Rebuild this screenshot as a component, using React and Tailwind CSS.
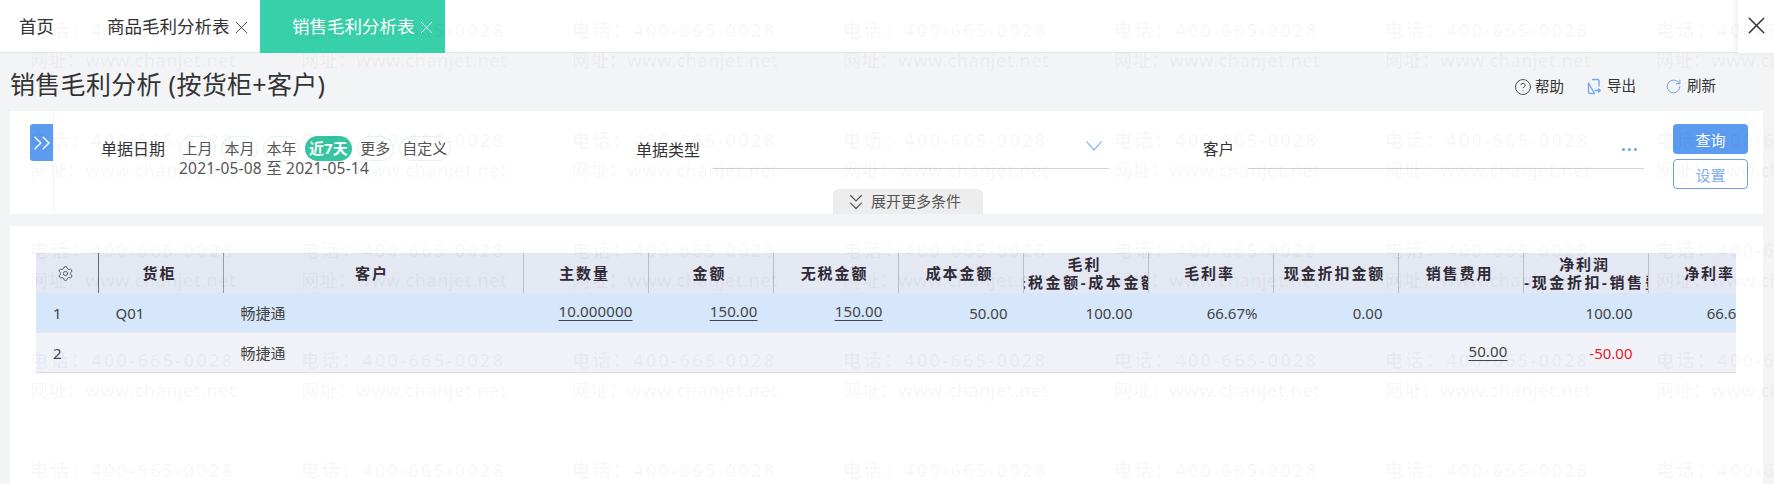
import { X, ChevronsDown, ChevronsRight, Settings, CircleHelp, RotateCw } from 'lucide-react'

const font = { fontFamily: '"Noto Sans", "Noto Sans CJK SC", sans-serif' }

const columns = [
  { title: '货柜' },
  { title: '客户' },
  { title: '主数量' },
  { title: '金额' },
  { title: '无税金额' },
  { title: '成本金额' },
  { title: '毛利', sub: '无税金额-成本金额' },
  { title: '毛利率' },
  { title: '现金折扣金额' },
  { title: '销售费用' },
  { title: '净利润', sub: '毛利-现金折扣-销售费用' },
  { title: '净利率' },
]

const rows = [
  {
    no: 1,
    bg: 'bg-[#d6e7fb]',
    cells: [
      { text: 'Q01', left: true },
      { text: '畅捷通', left: true },
      { text: '10.000000', link: true },
      { text: '150.00', link: true },
      { text: '150.00', link: true },
      { text: '50.00' },
      { text: '100.00' },
      { text: '66.67%' },
      { text: '0.00' },
      { text: '' },
      { text: '100.00' },
      { text: '66.67%' },
    ],
  },
  {
    no: 2,
    bg: 'bg-[#f0f2f7]',
    cells: [
      { text: '', left: true },
      { text: '畅捷通', left: true },
      { text: '' },
      { text: '' },
      { text: '' },
      { text: '' },
      { text: '' },
      { text: '' },
      { text: '' },
      { text: '50.00', link: true },
      { text: '-50.00', red: true },
      { text: '' },
    ],
  },
]

const gridCols = 'grid grid-cols-[62.5px_125px_300px_repeat(10,125px)] w-[1762.5px]'

function Watermark() {
  const tiles = Array.from({ length: 35 })
  return (
    <div className="absolute inset-0 overflow-hidden pointer-events-none z-10">
      <div className="grid grid-cols-[repeat(7,271px)] pl-[30px] pt-[15px]">
        {tiles.map((_, i) => (
          <div key={i} className="h-[110px] text-[18px] leading-[30px] font-medium text-black/[0.045] whitespace-nowrap">
            <div className="tracking-[2.4px]">电话：400-665-0028</div>
            <div className="tracking-[0.4px]">网址：www.chanjet.net</div>
          </div>
        ))}
      </div>
    </div>
  )
}

function Tabs() {
  return (
    <div className="h-[53px] shrink-0 bg-white border-b border-[#e4e5e8] flex relative">
      <div className="w-[88px] pl-[19px] leading-[52px] text-[17.5px] text-[#333]">首页</div>
      <div className="w-[172px] pl-[19px] flex items-center gap-[1px] text-[17.5px] text-[#333]">
        商品毛利分析表
        <X className="w-[21px] h-[21px] mt-[2px]" strokeWidth={1} />
      </div>
      <div className="w-[185px] h-[53px] pl-[32px] bg-[#38d0a9] flex items-center gap-[1px] text-[17.5px] text-white">
        销售毛利分析表
        <X className="w-[21px] h-[21px] mt-[2px]" strokeWidth={1} />
      </div>
      <div className="ml-auto w-[36px] h-[53px] bg-white shadow-[-3px_0_5px_rgba(0,0,0,0.06)] flex items-center justify-center">
        <X className="w-[29px] h-[29px] shrink-0 text-[#333] mb-[3px]" strokeWidth={1.2} />
      </div>
    </div>
  )
}

function ExportIcon() {
  return (
    <svg className="w-[14px] h-[17px]" viewBox="0 0 14 17" fill="none" stroke="#78a8ec" strokeWidth="1.4">
      <path d="M5 1.5h5.5A1.5 1.5 0 0 1 12 3v5.5" />
      <path d="M7.5 15.5H3A1.5 1.5 0 0 1 1.5 14V5z" strokeLinejoin="round" />
      <path d="M7.5 12.5h5.5M11.2 10.5l2 2-2 2" />
    </svg>
  )
}

function DownIcon() {
  return (
    <svg className="w-[16px] h-[10px]" viewBox="0 0 16 10" fill="none" stroke="#6ea3ea" strokeWidth="1.1">
      <path d="M.5.5 8 9l7.5-8.5" />
    </svg>
  )
}

function Toolbar() {
  return (
    <div className="h-[58px] shrink-0 flex items-center justify-between pl-[10px] pr-[58px]">
      <h1 className="text-[25px] tracking-[0.3px] text-[#333] leading-[36px] mt-[4px]">销售毛利分析 (按货柜+客户)</h1>
      <div className="flex items-center text-[14.5px] text-[#333] mb-[-8px]">
        <CircleHelp className="w-[18px] h-[18px] mr-[3px] mt-[2px]" strokeWidth={1.1} />
        <span className="mt-[2px]">帮助</span>
        <span className="ml-[23px] mr-[6px]"><ExportIcon /></span>
        <span>导出</span>
        <RotateCw className="w-[17px] h-[17px] ml-[29px] mr-[5px] text-[#6ea3ea]" strokeWidth={1.4} />
        <span>刷新</span>
      </div>
    </div>
  )
}

function Pill({ children, active }) {
  return active ? (
    <span className="h-[25px] leading-[25px] px-[4px] rounded-full bg-[#35c5a0] text-white font-bold">{children}</span>
  ) : (
    <span className="h-[25px] leading-[23px] px-[2.5px] rounded-full border border-[#e3f4f0]">{children}</span>
  )
}

function Filters() {
  return (
    <div className="h-[103px] shrink-0 mx-[10px] mr-[11px] bg-white flex flex-col text-[15px]">
      <div className="h-[78px] flex">
        <div className="w-[44px] h-[103px] shrink-0 pt-[13px] pl-[20px] border-r border-[#f3f4f6]">
          <div className="w-[23px] h-[37px] rounded-l-[3px] bg-[#5b9cf0] flex items-center justify-center">
            <ChevronsRight className="w-[28px] h-[28px] shrink-0 text-white" strokeWidth={1.2} />
          </div>
        </div>
        <div className="w-[582px] shrink-0 pl-[47px] pt-[25px] flex">
          <span className="w-[78px] leading-[27px] text-[16px] text-[#333]">单据日期</span>
          <div className="text-[#555]">
            <div className="flex gap-[5px]">
              <Pill>上月</Pill>
              <Pill>本月</Pill>
              <Pill>本年</Pill>
              <Pill active>近7天</Pill>
              <Pill>更多</Pill>
              <Pill>自定义</Pill>
            </div>
            <div className="text-[15.5px] leading-[15px] tracking-[0.2px]">2021-05-08 至 2021-05-14</div>
          </div>
        </div>
        <div className="w-[567px] shrink-0 pt-[13px]">
          <div className="flex h-[45px] w-[473px]">
            <span className="w-[77px] pt-[14px] text-[16px] text-[#333]">单据类型</span>
            <div className="flex-1 border-b border-[#d2d3d6] flex justify-end pr-[7px] pt-[17px]">
              <DownIcon />
            </div>
          </div>
        </div>
        <div className="w-[470px] shrink-0 pt-[13px]">
          <div className="flex h-[45px] w-[441px]">
            <span className="w-[45px] pt-[14px] text-[15.5px] text-[#333]">客户</span>
            <div className="flex-1 border-b border-[#d2d3d6] flex justify-end pr-[7px] pt-[24px] gap-[3px]">
              <span className="w-[3px] h-[3px] rounded-full bg-[#6ea3ea]"></span>
              <span className="w-[3px] h-[3px] rounded-full bg-[#6ea3ea]"></span>
              <span className="w-[3px] h-[3px] rounded-full bg-[#6ea3ea]"></span>
            </div>
          </div>
        </div>
        <div className="pt-[13px] flex flex-col gap-[5px]">
          <div className="w-[75px] h-[30px] rounded-[4px] bg-[#5b9cf0] text-white text-center leading-[32px]">查询</div>
          <div className="w-[75px] h-[30px] rounded-[4px] border border-[#6f9fe0] text-[#7fb0ee] text-center leading-[30px]">设置</div>
        </div>
      </div>
      <div className="h-[25px] pl-[823px]">
        <div className="w-[150px] h-[25px] pl-[10px] rounded-t-[6px] bg-[#ededed] flex items-center gap-[2px] text-[15px] text-[#555]">
          <ChevronsDown className="w-[26px] h-[26px] shrink-0" strokeWidth={1.1} />
          展开更多条件
        </div>
      </div>
    </div>
  )
}

function ReportTable() {
  return (
    <div className="flex-1 mt-[12px] ml-[10px] mr-[11px] bg-white pl-[26px] pt-[27px]">
      <div className="w-[1700px] overflow-hidden text-[15px] text-[#444]">
        <div className={`${gridCols} h-[40px] bg-[#e4e8f3]`}>
          <div className="border-r border-[#6b6c72] flex items-center justify-center pr-[2px]">
            <Settings className="w-[17px] h-[17px] text-[#444]" strokeWidth={1.2} />
          </div>
          {columns.map((col, i) => (
            <div
              key={col.title}
              className={`${i === 0 ? 'border-r border-[#9a9ba3]' : 'border-r border-[#b9bdc8]'} pr-[2px] overflow-hidden flex flex-col items-center justify-center font-bold text-[15px] leading-[18px] tracking-[1.9px] text-[#2f2a36] whitespace-nowrap`}
            >
              <div>{col.title}</div>
              {col.sub && <div className="tracking-[2.6px]">{col.sub}</div>}
            </div>
          ))}
        </div>
        {rows.map((row) => (
          <div key={row.no} className={`${gridCols} h-[40px] ${row.bg} ${row.no === 2 ? 'border-b border-[#d9dbe0]' : 'border-b border-[#e4e6ec]'}`}>
            <div className="pl-[17px] leading-[40px]">{row.no}</div>
            {row.cells.map((cell, i) => (
              <div
                key={i}
                className={`${cell.left ? 'pl-[17px] text-left' : 'pr-[16px] text-right'} ${cell.red ? 'text-[#e8202e]' : ''} leading-[40px] whitespace-nowrap overflow-hidden`}
              >
                {cell.link ? <span className="underline decoration-1 underline-offset-[3px] tracking-[0.15px] relative -top-[2px]">{cell.text}</span> : cell.text}
              </div>
            ))}
          </div>
        ))}
      </div>
    </div>
  )
}

export default function App() {
  return (
    <div className="relative w-[1774px] h-[484px] overflow-hidden bg-[#f3f4f6] flex flex-col" style={font}>
      <Tabs />
      <Toolbar />
      <Filters />
      <ReportTable />
      <Watermark />
    </div>
  )
}
